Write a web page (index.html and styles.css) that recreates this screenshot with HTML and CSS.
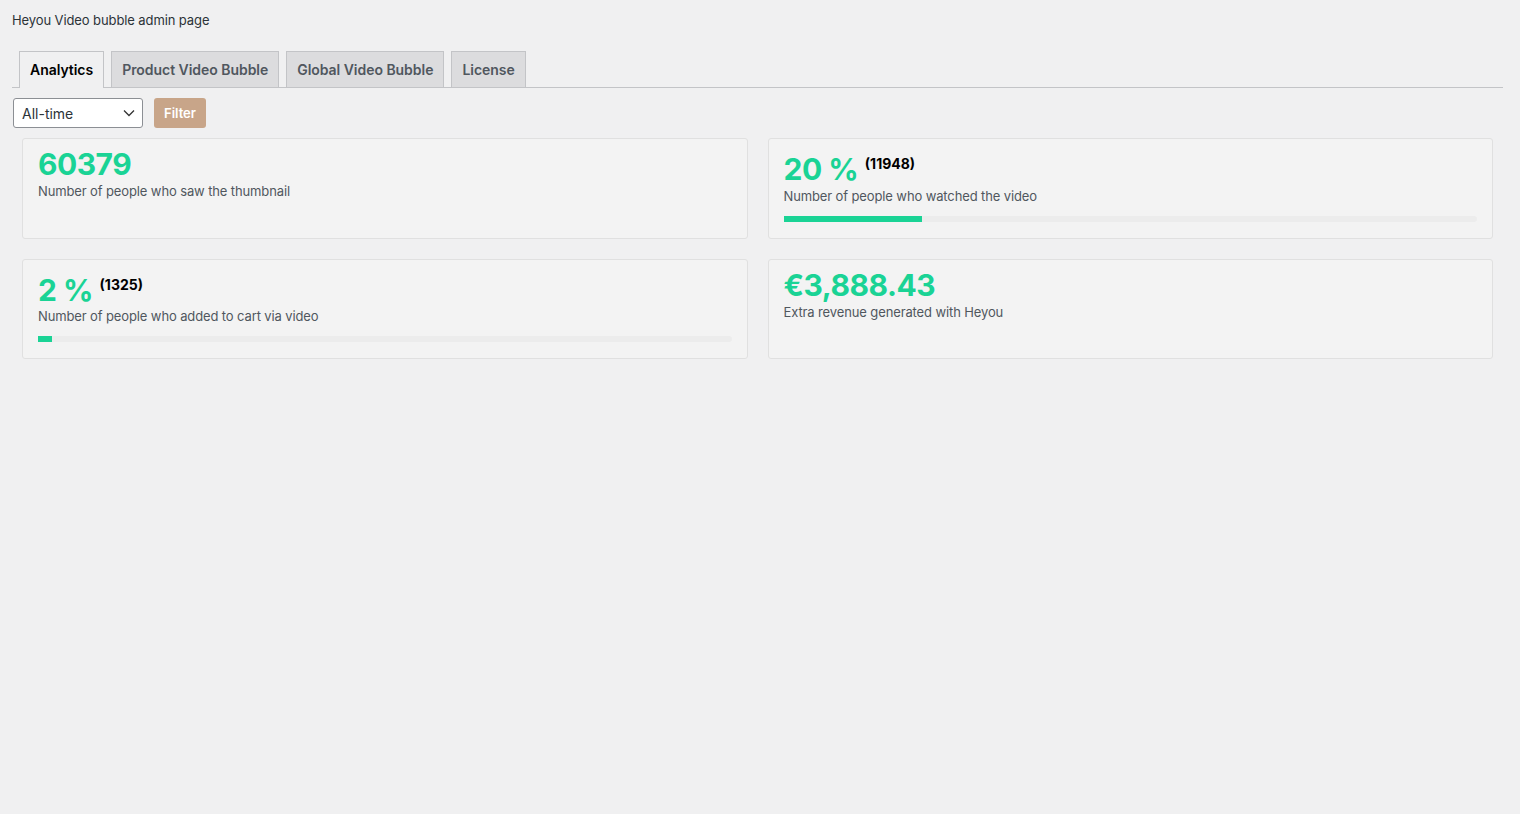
FILE: index.html
```html
<!DOCTYPE html>
<html>
<head>
<meta charset="utf-8">
<link rel="stylesheet" href="styles.css">
</head>
<body>
<div class="wrap">
  <p class="page-title">Heyou Video bubble admin page</p>
  <nav class="tabs">
    <a class="tab tab-active">Analytics</a>
    <a class="tab">Product Video Bubble</a>
    <a class="tab">Global Video Bubble</a>
    <a class="tab">License</a>
  </nav>
  <form class="filters">
    <div class="select-wrap">
      <select class="select"><option>All-time</option></select>
      <svg class="chevron" width="12" height="8" viewBox="0 0 12 8"><path d="M1 1.5 L6 6.5 L11 1.5" fill="none" stroke="#333" stroke-width="1.3"/></svg>
    </div>
    <button type="button" class="btn-filter">Filter</button>
  </form>
  <div class="cards">
    <div class="card">
      <h2 class="stat">60379</h2>
      <p class="label">Number of people who saw the thumbnail</p>
    </div>
    <div class="card">
      <h2 class="stat">20 % <sup class="count">(11948)</sup></h2>
      <p class="label">Number of people who watched the video</p>
      <div class="bar"><div class="bar-fill" style="width:20%"></div></div>
    </div>
    <div class="card">
      <h2 class="stat">2 % <sup class="count">(1325)</sup></h2>
      <p class="label">Number of people who added to cart via video</p>
      <div class="bar"><div class="bar-fill" style="width:2%"></div></div>
    </div>
    <div class="card">
      <h2 class="stat">€3,888.43</h2>
      <p class="label">Extra revenue generated with Heyou</p>
    </div>
  </div>
</div>
</body>
</html>
```
FILE: styles.css
```css
* { box-sizing: border-box; }
html, body {
  margin: 0;
  padding: 0;
  background: #f0f0f1;
  font-family: Inter, "Noto Sans", "Liberation Sans", sans-serif;
  color: #3c434a;
}
.wrap {
  padding: 0 17px 0 12px;
}
.page-title {
  margin: 0;
  padding-top: 12px;
  font-size: 13px;
  line-height: 17px;
  color: #2c3338;
  letter-spacing: -0.1px;
}
.tabs {
  display: flex;
  margin-top: 23px;
  border-bottom: 1px solid #c3c4c7;
  height: 36px;
  align-items: flex-end;
}
.tab {
  display: block;
  margin-left: 7px;
  padding: 6px 10px 5px;
  height: 36px;
  font-size: 14px;
  line-height: 24px;
  font-weight: 600;
  letter-spacing: -0.04px;
  color: #50575e;
  background: #dcdcde;
  border: 1px solid #c3c4c7;
  border-bottom: none;
}
.tab-active {
  background: #f0f0f1;
  color: #000;
  height: 37px;
  margin-bottom: -1px;
}
.filters {
  display: flex;
  gap: 11px;
  margin-top: 10px;
  padding-left: 1px;
}
.select-wrap {
  position: relative;
  width: 130px;
  height: 30px;
}
.select {
  appearance: none;
  -webkit-appearance: none;
  width: 100%;
  height: 30px;
  background: #fff;
  border: 1px solid #8c8f94;
  border-radius: 3px;
  padding: 0 24px 0 8px;
  font-family: inherit;
  font-size: 14px;
  color: #2c3338;
}
.chevron {
  position: absolute;
  right: 8px;
  top: 11px;
}
.btn-filter {
  height: 30px;
  padding: 0 10px;
  border: none;
  border-radius: 3px;
  background: #c8a589;
  color: #fff;
  font-family: inherit;
  font-size: 13px;
  font-weight: 600;
}
.cards {
  display: grid;
  grid-template-columns: 1fr 1fr;
  gap: 20px;
  margin: 10px 10px 0 10px;
}
.card {
  background: #f3f3f3;
  border: 1px solid #e0e0e0;
  border-radius: 3px;
  padding: 9px 15px 16px;
}
.stat {
  margin: 0;
  font-size: 30px;
  line-height: 32px;
  font-weight: 700;
  letter-spacing: -0.5px;
  color: #1ad395;
}
.count {
  font-size: 14px;
  font-weight: 700;
  letter-spacing: 0;
  color: #000;
  vertical-align: 0.75em;
}
.label {
  margin: 3px 0 0;
  font-size: 13px;
  line-height: 17px;
  letter-spacing: -0.12px;
  color: #50575e;
}
.bar {
  margin-top: 11px;
  height: 6px;
  background: #ececec;
  border-radius: 0 4px 4px 0;
  overflow: hidden;
}
.bar-fill {
  height: 100%;
  background: #1ad395;
}
```
